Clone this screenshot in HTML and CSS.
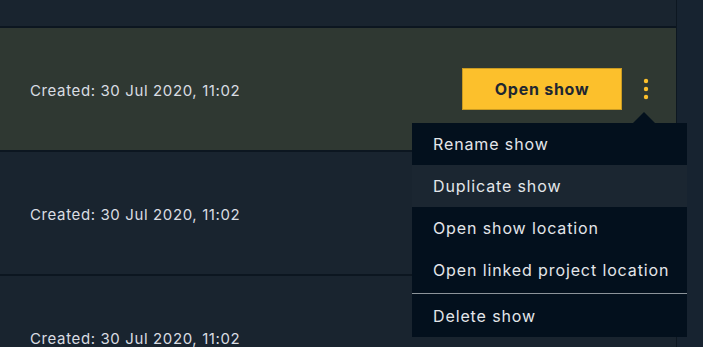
FILE: index.html
```html
<!DOCTYPE html>
<html>
<head>
<meta charset="utf-8">
<link rel="stylesheet" href="styles.css">
</head>
<body>
<div class="page">
  <div class="list">
    <div class="row"></div>
    <div class="row row-active">
      <span class="created">Created: 30 Jul 2020, 11:02</span>
      <div class="actions">
        <button class="open-btn">Open show</button>
        <div class="kebab-wrap">
          <button class="kebab" aria-label="More">
            <svg width="6" height="22" viewBox="0 0 6 22"><circle cx="3" cy="3" r="2.2" fill="#fcc02c"/><circle cx="3" cy="11" r="2.2" fill="#fcc02c"/><circle cx="3" cy="19" r="2.2" fill="#fcc02c"/></svg>
          </button>
          <ul class="menu">
            <li class="menu-item">Rename show</li>
            <li class="menu-item menu-item-hover">Duplicate show</li>
            <li class="menu-item">Open show location</li>
            <li class="menu-item">Open linked project location</li>
            <li class="menu-sep"></li>
            <li class="menu-item">Delete show</li>
          </ul>
        </div>
      </div>
    </div>
    <div class="row">
      <span class="created">Created: 30 Jul 2020, 11:02</span>
    </div>
    <div class="row">
      <span class="created">Created: 30 Jul 2020, 11:02</span>
    </div>
  </div>
  <div class="side"></div>
</div>
</body>
</html>
```

FILE: styles.css
```css
html, body {
  margin: 0;
  padding: 0;
  height: 100%;
  overflow: hidden;
  background: #172330;
  font-family: Inter, "Noto Sans", sans-serif;
}
.page {
  display: flex;
  height: 347px;
  overflow: hidden;
}
.list {
  width: 676px;
  flex: none;
  margin-top: -96px;
  border-right: 1px solid #0d1721;
}
.side {
  flex: 1;
  background: #172330;
}
.row {
  height: 122px;
  background: #19242f;
  border-bottom: 2px solid #0c1620;
  display: flex;
  align-items: center;
  justify-content: space-between;
  padding: 0 18px 0 30px;
  position: relative;
}
.row-active {
  background: #2f3832;
  z-index: 2;
}
.created {
  color: #d9dde2;
  font-size: 15px;
  font-weight: 400;
  letter-spacing: 0.62px;
  padding-top: 3px;
}
.actions {
  display: flex;
  align-items: center;
}
.open-btn {
  width: 160px;
  height: 42px;
  background: #fcc02c;
  border: 1px solid #c99a22;
  color: #1e2731;
  font-family: Inter, "Noto Sans", sans-serif;
  font-weight: 700;
  font-size: 16px;
  letter-spacing: 0.75px;
  margin-right: 12px;
  padding: 0;
}
.kebab-wrap {
  position: relative;
}
.kebab {
  width: 24px;
  height: 32px;
  background: none;
  border: 0;
  padding: 0;
  display: flex;
  align-items: center;
  justify-content: center;
}
.menu {
  position: absolute;
  top: 50px;
  right: -29px;
  width: 275px;
  margin: 0;
  padding: 0;
  list-style: none;
  background: #03101d;
}
.menu::before {
  content: "";
  position: absolute;
  top: -11px;
  left: 221px;
  border-left: 11px solid transparent;
  border-right: 11px solid transparent;
  border-bottom: 11px solid #03101d;
}
.menu-item {
  height: 42px;
  display: flex;
  align-items: center;
  padding-left: 21px;
  color: #e3e6ea;
  font-size: 16px;
  letter-spacing: 0.88px;
}
.menu-item-hover {
  background: #1b2631;
}
.menu-sep {
  height: 1px;
  background: #8c949a;
  margin: 2px 0 1px;
}
```
